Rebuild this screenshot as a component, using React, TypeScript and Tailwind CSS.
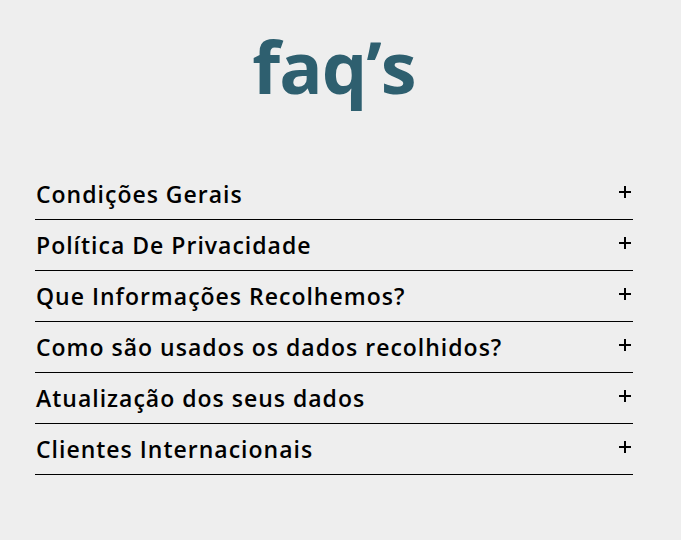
const items = [
  "Condições Gerais",
  "Política De Privacidade",
  "Que Informações Recolhemos?",
  "Como são usados os dados recolhidos?",
  "Atualização dos seus dados",
  "Clientes Internacionais",
];

const Plus = () => (
  <svg width="12" height="12" viewBox="0 0 12 12" className="shrink-0 -mt-[4px]">
    <path d="M6 0v12M0 6h12" stroke="#000" strokeWidth="2" />
  </svg>
);

export default function App() {
  return (
    <div className="min-h-[540px] w-full bg-[#eeeeee] font-['Open_Sans','Liberation_Sans',sans-serif]">
      <div className="ml-[35px] w-[598px] pt-[26px]">
        {/* Heading */}
        <h1 className="text-center text-[72px] font-bold leading-[80px] tracking-[-1px] text-[#2e5f6f]">
          faq’s
        </h1>

        {/* FAQ list */}
        <div className="mt-[63px]">
          {items.map((item) => (
            <div
              key={item}
              className="flex h-[51px] items-center justify-between border-b border-black pl-[1px] pr-[2px]"
            >
              <span className="text-[23px] font-semibold tracking-[1px] text-black">{item}</span>
              <Plus />
            </div>
          ))}
        </div>
      </div>
    </div>
  );
}
